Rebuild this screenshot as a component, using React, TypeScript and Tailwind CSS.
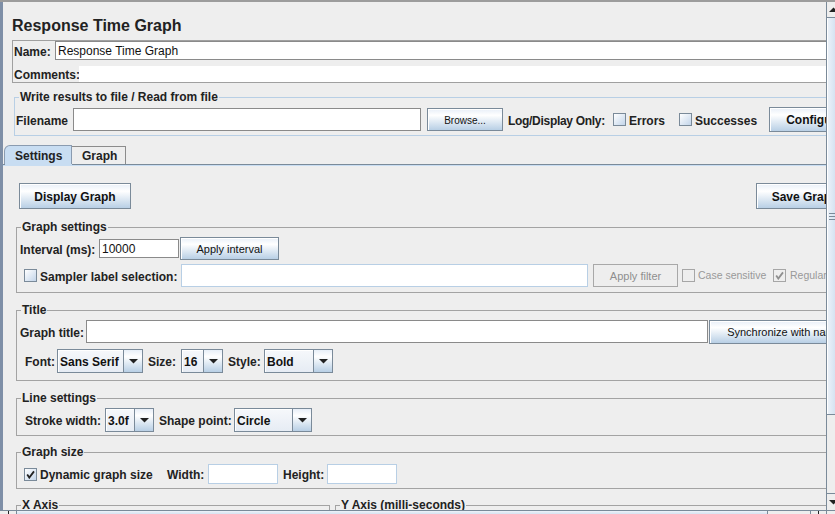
import React from "react";

const BTN =
  "flex items-center justify-center pt-[1px] border border-[#7a8a99] bg-linear-to-b from-[#e8eff8] via-white via-30% to-[#b8cfe5] shadow-[inset_1px_1px_0_#ffffff] text-[#111] whitespace-nowrap shrink-0";

const LBL = "shrink-0 whitespace-nowrap pt-[2px] font-bold";

function Check({ checked, disabled }: { checked?: boolean; disabled?: boolean }) {
  return (
    <span
      className={
        disabled
          ? "w-[13px] h-[13px] shrink-0 border border-[#a6a6a6] bg-[#eeeeee] flex items-center justify-center"
          : "w-[13px] h-[13px] shrink-0 border border-[#7a8a99] bg-linear-to-br from-white to-[#c3d5ea] flex items-center justify-center"
      }
    >
      {checked && (
        <svg width="9" height="9" viewBox="0 0 9 9">
          <path
            d="M1.2 4.6 L3.3 7.6 L8 1.4"
            fill="none"
            stroke={disabled ? "#8f8f8f" : "#222222"}
            strokeWidth="1.8"
          />
        </svg>
      )}
    </span>
  );
}

function Combo({ text, className }: { text: string; className: string }) {
  return (
    <div className={"flex h-[24px] border border-[#7a8a99] shrink-0 " + className}>
      <div className="flex-1 flex items-center pl-[2px] pt-[2px] bg-linear-to-b from-[#f6f8fb] to-[#e6ecf4] shadow-[inset_1px_1px_0_#ffffff] border-r border-[#7a8a99] font-bold text-[12px] text-[#111] whitespace-nowrap overflow-hidden">
        {text}
      </div>
      <div className="w-[18px] flex items-center justify-center bg-linear-to-b from-[#e8eff8] via-white via-30% to-[#b8cfe5]">
        <svg width="9" height="5" viewBox="0 0 9 5">
          <polygon points="0,0 9,0 4.5,4.5" fill="#222222" />
        </svg>
      </div>
    </div>
  );
}

function Group({
  title,
  className,
  children,
}: {
  title: string;
  className: string;
  children?: React.ReactNode;
}) {
  return (
    <fieldset className={"border min-w-0 " + className}>
      <legend className="ml-[4px] px-[1px] text-[12px] leading-[15px] font-bold text-[#222] whitespace-nowrap">
        {title}
      </legend>
      {children}
    </fieldset>
  );
}

export default function App() {
  return (
    <div className="w-[835px] h-[514px] overflow-hidden bg-[#eeeeee] flex flex-col font-['Liberation_Sans',Arial,sans-serif] text-[12px] text-[#222]">
      <div className="h-[2px] bg-[#9c9c9c] shrink-0" />
      <div className="flex flex-1 min-h-0">
        <div className="w-[3px] bg-[#7e8fa7] shrink-0" />
        <div className="flex-1 overflow-hidden">
          <div className="w-[867px] flex flex-col">
            {/* Title */}
            <div className="mt-[13px] ml-[9px] h-[20px] pt-[2px] leading-[18px] text-[16px] font-bold text-[#222]">
              Response Time Graph
            </div>

            {/* Name / Comments */}
            <div className="mt-[5px] ml-[9px] border border-[#a0a0a0] flex flex-col">
              <div className="flex items-start h-[20px]">
                <span className={LBL + " w-[42px] pl-[1px] self-center"}>Name:</span>
                <div className="flex-1 h-[19px] bg-white border border-[#8a8a8a] flex items-center pl-[2px] pt-[1px] text-[12px] text-[#111]">
                  Response Time Graph
                </div>
              </div>
              <div className="flex h-[16px] mt-[5px]">
                <span className={LBL + " w-[66px] pl-[1px] flex items-center"}>Comments:</span>
                <div className="flex-1 bg-white" />
              </div>
            </div>

            {/* Write results */}
            <Group title="Write results to file / Read from file" className="mt-[7px] ml-[11px] border-[#b8cfe5]">
              <div className="flex items-center h-[25px] mt-[2px] mb-[3px] pl-[1px]">
                <span className={LBL + " w-[57px]"}>Filename</span>
                <div className="w-[348px] h-[23px] bg-white border border-[#8a8a8a] shrink-0" />
                <div className={BTN + " ml-[6px] w-[76px] h-[23px] text-[10px]"}>Browse...</div>
                <span className={LBL + " ml-[5px] w-[97px] tracking-[-0.3px]"}>Log/Display Only:</span>
                <span className="ml-[8px] shrink-0">
                  <Check />
                </span>
                <span className={LBL + " ml-[3px] w-[36px]"}>Errors</span>
                <span className="ml-[14px] shrink-0">
                  <Check />
                </span>
                <span className={LBL + " ml-[3px] w-[64px]"}>Successes</span>
                <div className={BTN + " ml-[10px] w-[91px] h-[25px] font-bold text-[12px]"}>Configure</div>
              </div>
            </Group>

            {/* Tabs */}
            <div className="flex ml-[1px] h-[19px] mt-[9px] items-end">
              <div className="h-[19px] w-[68px] bg-[#c8ddf2] border border-b-0 border-[#8a9bb0] rounded-tl-[6px] flex items-center pl-[10px] pt-[1px] font-bold">
                Settings
              </div>
              <div className="h-[18px] w-[54px] bg-[#eeeeee] border border-b-0 border-l-0 border-[#8c8c8c] flex items-center pl-[10px] font-bold">
                Graph
              </div>
            </div>
            <div className="flex h-[1px]">
              <div className="w-[2px] bg-[#7a8a99]" />
              <div className="w-[67px] bg-[#c8ddf2]" />
              <div className="flex-1 bg-[#7a8a99]" />
            </div>
            <div className="h-[1px] bg-[#c8ddf2]" />

            {/* Buttons */}
            <div className="flex pl-[16px] pr-[16px] mt-[17px]">
              <div className={BTN + " w-[112px] h-[26px] font-bold text-[12px]"}>Display Graph</div>
              <div className={BTN + " ml-auto w-[98px] h-[26px] font-bold text-[12px]"}>Save Graph</div>
            </div>

            {/* Graph settings */}
            <Group title="Graph settings" className="mt-[11px] ml-[13px] border-[#a3a3a3]">
              <div className="flex items-center h-[23px] mt-[2px] pl-[3px]">
                <span className={LBL + " w-[79px]"}>Interval (ms):</span>
                <div className="w-[80px] h-[19px] bg-white border border-[#8a8a8a] flex items-center pl-[2px] pt-[1px] text-[#111] shrink-0">
                  10000
                </div>
                <div className={BTN + " ml-[1px] w-[99px] h-[23px] text-[11px]"}>Apply interval</div>
              </div>
              <div className="flex items-center h-[23px] mt-[4px] mb-[5px] pl-[7px]">
                <Check />
                <span className={LBL + " ml-[3px] w-[141px]"}>Sampler label selection:</span>
                <div className="w-[407px] h-[23px] bg-white border border-[#b8cfe5] shrink-0" />
                <div className="ml-[5px] w-[85px] h-[23px] pt-[1px] border border-[#a8a8a8] bg-[#eeeeee] flex items-center justify-center text-[11px] text-[#8e8e8e] shrink-0">
                  Apply filter
                </div>
                <span className="ml-[4px] shrink-0">
                  <Check disabled />
                </span>
                <span className="ml-[3px] w-[66px] pt-[1px] shrink-0 text-[10.5px] text-[#999] whitespace-nowrap">Case sensitive</span>
                <span className="ml-[9px] shrink-0">
                  <Check disabled checked />
                </span>
                <span className="ml-[4px] pt-[1px] shrink-0 text-[10.5px] text-[#999] whitespace-nowrap">Regular expression</span>
              </div>
            </Group>

            {/* Title */}
            <Group title="Title" className="mt-[10px] ml-[13px] border-[#a3a3a3]">
              <div className="flex items-start h-[24px] mt-[2px] pl-[3px]">
                <span className={LBL + " w-[66px] self-center"}>Graph title:</span>
                <div className="w-[622px] h-[23px] bg-white border border-[#8a8a8a] shrink-0" />
                <div className={BTN + " ml-[1px] w-[150px] h-[24px] text-[11px]"}>Synchronize with name</div>
              </div>
              <div className="flex items-center h-[24px] mt-[5px] mb-[7px] pl-[8px]">
                <span className={LBL + " w-[27px]"}>Font:</span>
                <Combo text="Sans Serif" className="ml-[5px] w-[86px]" />
                <span className={LBL + " ml-[5px] w-[28px]"}>Size:</span>
                <Combo text="16" className="ml-[5px] w-[42px]" />
                <span className={LBL + " ml-[5px] w-[31px]"}>Style:</span>
                <Combo text="Bold" className="ml-[5px] w-[69px]" />
              </div>
            </Group>

            {/* Line settings */}
            <Group title="Line settings" className="mt-[10px] ml-[13px] border-[#a3a3a3]">
              <div className="flex items-center h-[24px] mt-[2px] mb-[3px] pl-[8px]">
                <span className={LBL + " w-[75px]"}>Stroke width:</span>
                <Combo text="3.0f" className="ml-[5px] w-[49px]" />
                <span className={LBL + " ml-[5px] w-[71px]"}>Shape point:</span>
                <Combo text="Circle" className="ml-[4px] w-[78px]" />
              </div>
            </Group>

            {/* Graph size */}
            <Group title="Graph size" className="mt-[9px] ml-[13px] border-[#a3a3a3]">
              <div className="flex items-center h-[20px] mt-[4px] mb-[4px] pl-[7px]">
                <Check checked />
                <span className={LBL + " ml-[3px] w-[111px]"}>Dynamic graph size</span>
                <span className={LBL + " ml-[16px] w-[36px]"}>Width:</span>
                <div className="ml-[5px] w-[70px] h-[20px] bg-white border border-[#b8cfe5] shrink-0" />
                <span className={LBL + " ml-[5px] w-[39px]"}>Height:</span>
                <div className="ml-[5px] w-[70px] h-[20px] bg-white border border-[#b8cfe5] shrink-0" />
              </div>
            </Group>

            {/* Axis */}
            <div className="flex mt-[9px] ml-[13px]">
              <Group title="X Axis" className="w-[314px] h-[40px] shrink-0 border-[#a3a3a3]" />
              <Group title="Y Axis (milli-seconds)" className="ml-[5px] flex-1 h-[40px] border-[#a3a3a3]" />
            </div>
          </div>
        </div>

        {/* Vertical scrollbar */}
        <div className="w-[9px] shrink-0 flex flex-col border-l border-[#7a8a99]">
          <div className="h-[15px] bg-[#eeeeee] overflow-hidden">
            <svg width="9" height="15" viewBox="0 0 9 15">
              <polygon points="2,10 6.5,5.5 11,10" fill="#222222" />
            </svg>
          </div>
          <div className="h-[398px] bg-linear-to-r from-[#eef3f9] to-[#d6e3f1] border-t border-b border-[#7a8a99] shadow-[inset_1px_0_0_#ffffff] flex items-center">
            <div className="flex flex-col gap-[2px] ml-[2px]">
              <div className="w-[7px] h-[1px] bg-[#7a8a99]" />
              <div className="w-[7px] h-[1px] bg-[#7a8a99]" />
              <div className="w-[7px] h-[1px] bg-[#7a8a99]" />
            </div>
          </div>
          <div className="flex-1 bg-[#eeeeee]" />
          <div className="h-[17px] border-t border-[#7a8a99] bg-[#eeeeee] overflow-hidden">
            <svg width="9" height="16" viewBox="0 0 9 16">
              <polygon points="2,6 11,6 6.5,10.5" fill="#222222" />
            </svg>
          </div>
        </div>
      </div>

      {/* Horizontal scrollbar */}
      <div className="h-[4px] shrink-0 flex border-t border-[#7a8a99]">
        <div className="w-[17px] bg-[#eeeeee] border-r border-[#7a8a99] flex justify-center">
          <div className="w-[1px] h-[3px] bg-[#222]" />
        </div>
        <div className="w-[751px] bg-linear-to-b from-[#eef3f9] to-[#d6e3f1] border-r border-[#7a8a99]" />
        <div className="w-[42px] bg-[#eeeeee]" />
        <div className="w-[16px] bg-[#eeeeee] border-l border-[#7a8a99] flex justify-center">
          <div className="w-[1px] h-[3px] bg-[#222]" />
        </div>
        <div className="flex-1 bg-[#eeeeee] border-l border-[#7a8a99]" />
      </div>
    </div>
  );
}
